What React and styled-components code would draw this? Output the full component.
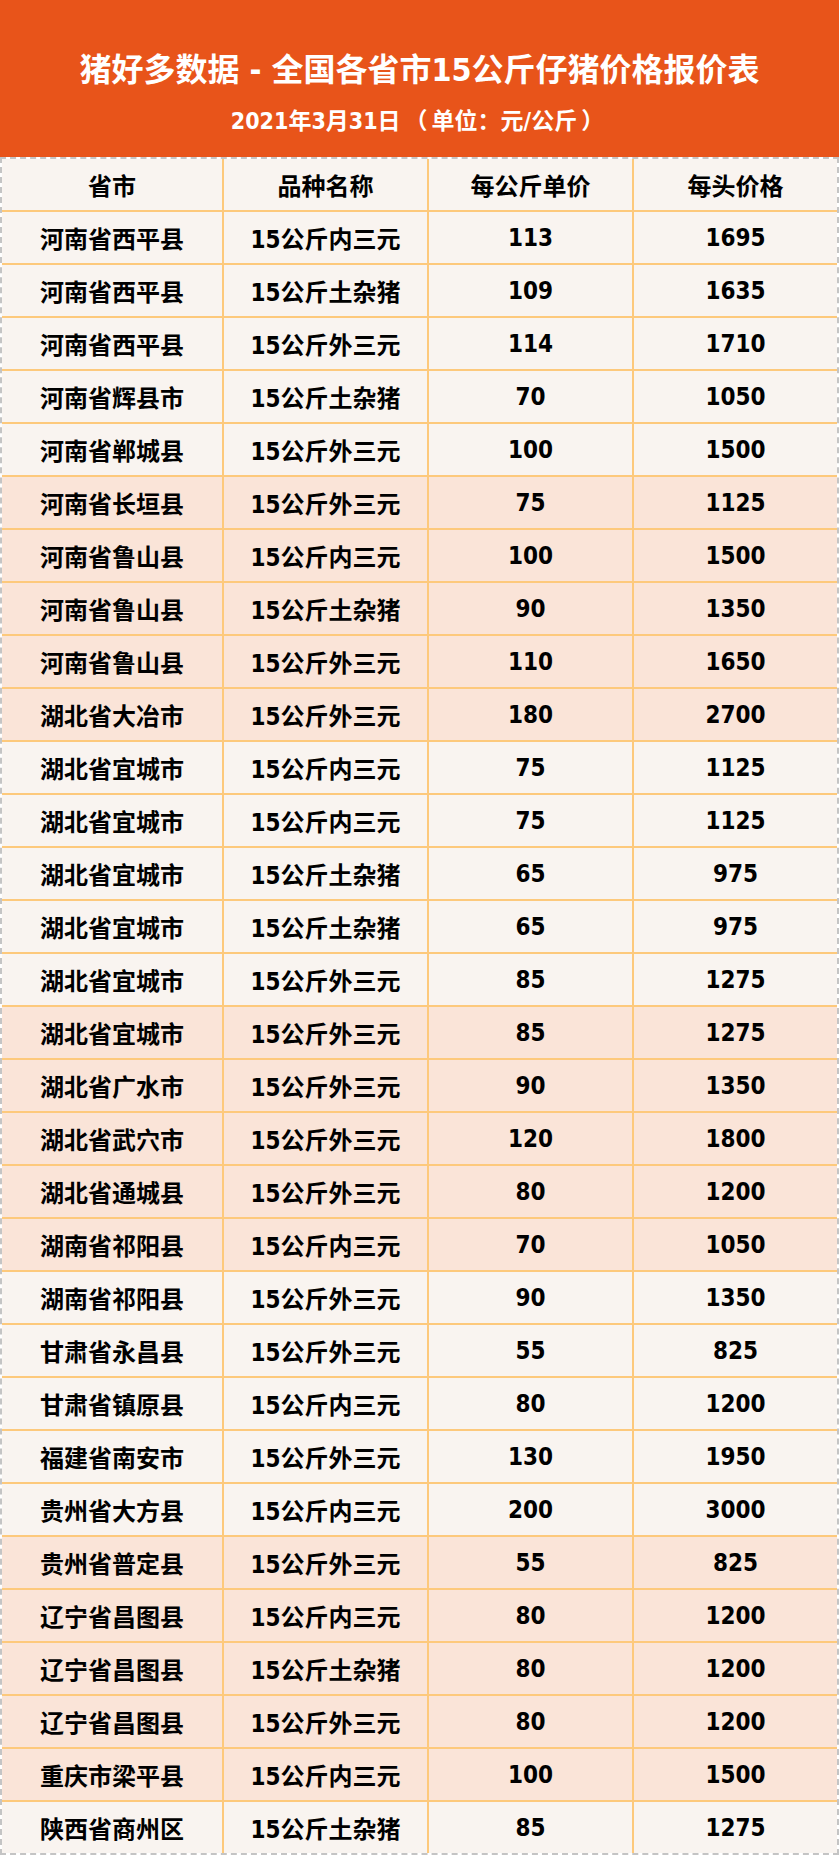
import React from 'react'
import styled, { createGlobalStyle } from 'styled-components'

const GlobalStyle = createGlobalStyle`
  html, body {
    margin: 0;
    padding: 0;
    background: #fff;
  }
`

const FONT = `"DejaVu Sans Condensed", "DejaVu Sans", "Noto Sans CJK SC", sans-serif`

const Page = styled.div`
  width: 839px;
  font-family: ${FONT};
  font-stretch: condensed;
`

const Banner = styled.header`
  height: 157px;
  background: #e8541a;
  color: #fff;
  display: flex;
  flex-direction: column;
  align-items: center;
  box-sizing: border-box;
  padding-top: 49px;
`

const Title = styled.h1`
  margin: 0;
  font-size: 32px;
  line-height: 42px;
  font-weight: bold;
  white-space: nowrap;
`

const Subtitle = styled.div`
  margin-top: 15px;
  font-size: 23px;
  line-height: 30px;
  font-weight: bold;
  white-space: nowrap;
`

const Paren = styled.span`
  margin: 0 4px;
`

const Sheet = styled.div`
  border: 2px dashed #c4c4c4;
`

const Row = styled.div`
  display: grid;
  grid-template-columns: 220px 203px 203px 203px;
  column-gap: 2px;
  background: ${p => (p.$peach ? '#fae4d8' : '#f9f4f0')};
  border-bottom: ${p => (p.$last ? 'none' : '2px solid #fdc97c')};
  background-image: linear-gradient(#fdc97c, #fdc97c), linear-gradient(#fdc97c, #fdc97c), linear-gradient(#fdc97c, #fdc97c);
  background-size: 2px 100%, 2px 100%, 2px 100%;
  background-position: 220px 0, 425px 0, 630px 0;
  background-repeat: no-repeat;
`

const Cell = styled.div`
  height: 51px;
  display: flex;
  align-items: center;
  justify-content: center;
  font-size: 24px;
  font-weight: bold;
  color: #000;
  white-space: nowrap;
`

const rows = [
  ['河南省西平县', '15公斤内三元', 113, 1695],
  ['河南省西平县', '15公斤土杂猪', 109, 1635],
  ['河南省西平县', '15公斤外三元', 114, 1710],
  ['河南省辉县市', '15公斤土杂猪', 70, 1050],
  ['河南省郸城县', '15公斤外三元', 100, 1500],
  ['河南省长垣县', '15公斤外三元', 75, 1125],
  ['河南省鲁山县', '15公斤内三元', 100, 1500],
  ['河南省鲁山县', '15公斤土杂猪', 90, 1350],
  ['河南省鲁山县', '15公斤外三元', 110, 1650],
  ['湖北省大冶市', '15公斤外三元', 180, 2700],
  ['湖北省宜城市', '15公斤内三元', 75, 1125],
  ['湖北省宜城市', '15公斤内三元', 75, 1125],
  ['湖北省宜城市', '15公斤土杂猪', 65, 975],
  ['湖北省宜城市', '15公斤土杂猪', 65, 975],
  ['湖北省宜城市', '15公斤外三元', 85, 1275],
  ['湖北省宜城市', '15公斤外三元', 85, 1275],
  ['湖北省广水市', '15公斤外三元', 90, 1350],
  ['湖北省武穴市', '15公斤外三元', 120, 1800],
  ['湖北省通城县', '15公斤外三元', 80, 1200],
  ['湖南省祁阳县', '15公斤内三元', 70, 1050],
  ['湖南省祁阳县', '15公斤外三元', 90, 1350],
  ['甘肃省永昌县', '15公斤外三元', 55, 825],
  ['甘肃省镇原县', '15公斤内三元', 80, 1200],
  ['福建省南安市', '15公斤外三元', 130, 1950],
  ['贵州省大方县', '15公斤内三元', 200, 3000],
  ['贵州省普定县', '15公斤外三元', 55, 825],
  ['辽宁省昌图县', '15公斤内三元', 80, 1200],
  ['辽宁省昌图县', '15公斤土杂猪', 80, 1200],
  ['辽宁省昌图县', '15公斤外三元', 80, 1200],
  ['重庆市梁平县', '15公斤内三元', 100, 1500],
  ['陕西省商州区', '15公斤土杂猪', 85, 1275],
]

const App = () => (
  <Page>
    <GlobalStyle />
    <Banner>
      <Title>猪好多数据 - 全国各省市15公斤仔猪价格报价表</Title>
      <Subtitle>
        2021年3月31日<Paren>（</Paren>单位：元/公斤<Paren>）</Paren>
      </Subtitle>
    </Banner>
    <Sheet>
      <Row>
        <Cell>省市</Cell>
        <Cell>品种名称</Cell>
        <Cell>每公斤单价</Cell>
        <Cell>每头价格</Cell>
      </Row>
      {rows.map((r, i) => (
        // every block of five rows switches shade
        <Row key={i} $peach={Math.floor(i / 5) % 2 === 1} $last={i === rows.length - 1}>
          {r.map((v, j) => (
            <Cell key={j}>{v}</Cell>
          ))}
        </Row>
      ))}
    </Sheet>
  </Page>
)

export default App
